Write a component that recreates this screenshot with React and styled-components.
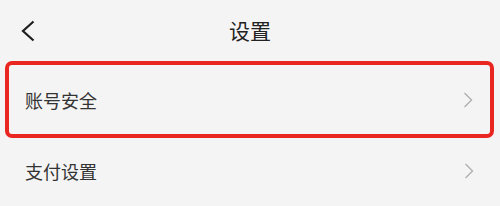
import React from 'react';
import styled, { createGlobalStyle } from 'styled-components';

const GlobalStyle = createGlobalStyle`
  html, body {
    margin: 0;
    padding: 0;
    background: #f4f4f4;
  }
  body {
    font-family: "Noto Sans CJK SC", "Noto Sans", sans-serif;
  }
`;

const Page = styled.div`
  width: 500px;
  height: 206px;
  overflow: hidden;
  display: flex;
  flex-direction: column;
  background: #f4f4f4;
`;

const Header = styled.header`
  height: 61px;
  flex-shrink: 0;
  display: grid;
  grid-template-columns: 60px 1fr 60px;
  align-items: center;
`;

const BackButton = styled.button`
  border: 0;
  background: none;
  padding: 0 0 0 21px;
  height: 100%;
  display: flex;
  align-items: center;
  cursor: pointer;
`;

const Title = styled.h1`
  margin: 0;
  text-align: center;
  font-size: 21px;
  font-weight: 400;
  color: #222;
  line-height: 1;
`;

const Highlight = styled.div`
  margin: 0 6px 0 5px;
  border: 4px solid #ea2620;
  border-radius: 7px;
`;

const Row = styled.div`
  height: ${(p) => p.$height}px;
  display: flex;
  align-items: center;
  justify-content: space-between;
  padding: 0 ${(p) => p.$right}px 0 ${(p) => p.$left}px;
  cursor: pointer;
`;

const Label = styled.span`
  font-size: 18px;
  color: #333;
  line-height: 1;
`;

const BackIcon = () => (
  <svg width="14" height="22" viewBox="0 0 14 22">
    <polyline points="12.5,1.5 2,11 12.5,20.5" fill="none" stroke="#1e1e1e" strokeWidth="2.2" />
  </svg>
);

const Chevron = () => (
  <svg width="10" height="16" viewBox="0 0 10 16">
    <polyline points="1.5,1 8.5,8 1.5,15" fill="none" stroke="#adadad" strokeWidth="1.3" />
  </svg>
);

const App = () => (
  <>
    <GlobalStyle />
    <Page>
      <Header>
        <BackButton aria-label="返回">
          <BackIcon />
        </BackButton>
        <Title>设置</Title>
        <span />
      </Header>
      <Highlight>
        <Row $height={69} $left={16} $right={17}>
          <Label>账号安全</Label>
          <Chevron />
        </Row>
      </Highlight>
      <Row $height={66} $left={25} $right={26}>
        <Label>支付设置</Label>
        <Chevron />
      </Row>
    </Page>
  </>
);

export default App;
